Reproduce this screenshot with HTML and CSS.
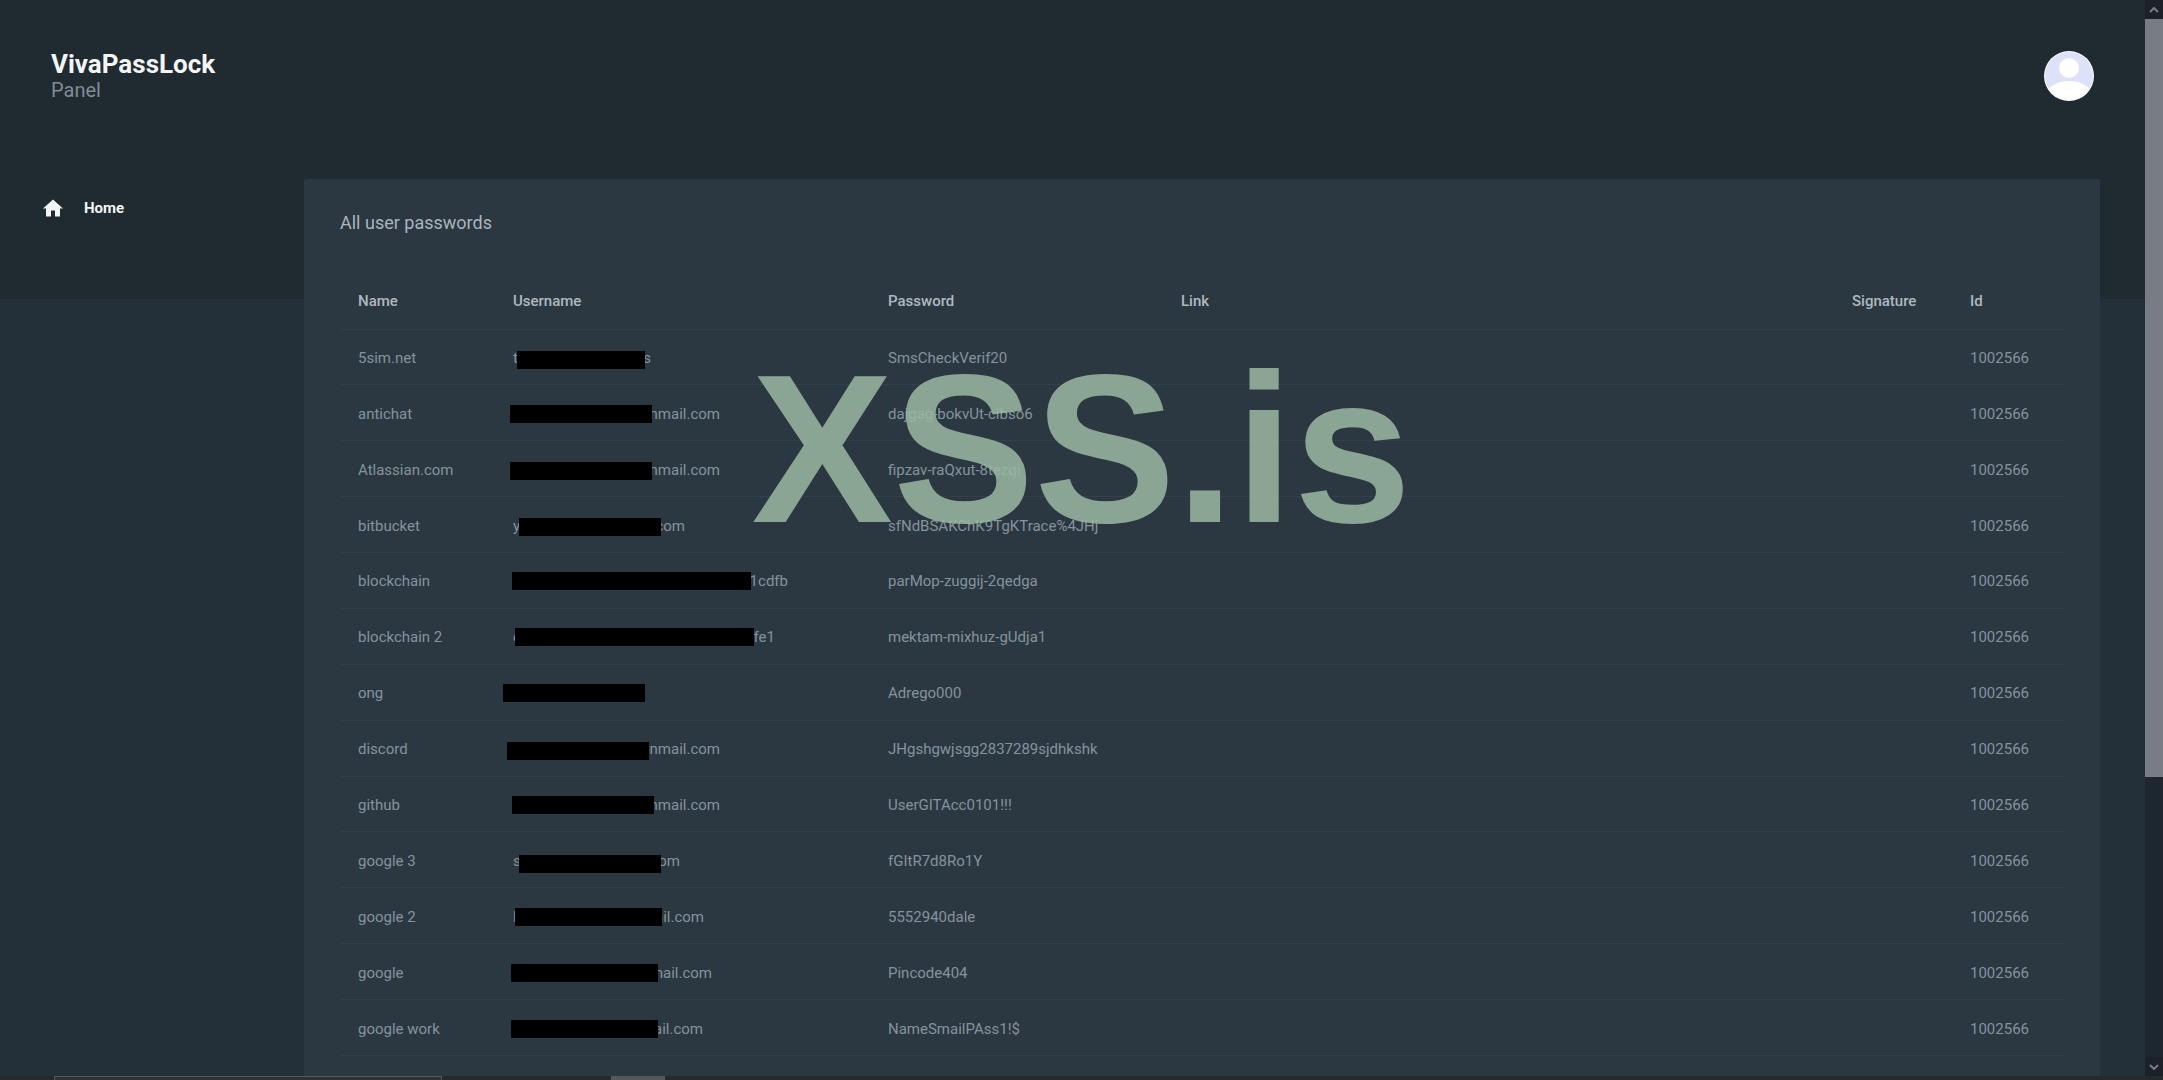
FILE: index.html
```html
<!DOCTYPE html>
<html lang="en">
<head>
    <meta charset="UTF-8">
    <meta name="viewport" content="width=device-width, initial-scale=1.0">
    <title>VivaPassLock</title>
    <link rel="stylesheet" href="styles.css">
</head>
<body>
    <div class="viewport">
        <div class="page">
            <header class="header">
                <div class="brand">
                    <h1>VivaPassLock</h1>
                    <p>Panel</p>
                </div>
                <button class="avatar" type="button" aria-label="Account">
                    <svg viewBox="0 0 50 50" width="50" height="50">
                        <defs>
                            <clipPath id="round"><circle cx="25" cy="25" r="24"/></clipPath>
                        </defs>
                        <circle cx="25" cy="25" r="25" fill="#fff"/>
                        <g clip-path="url(#round)">
                            <rect width="50" height="50" fill="#dde2fa"/>
                            <circle cx="25" cy="17" r="10" fill="#fff"/>
                            <ellipse cx="25" cy="48" rx="25" ry="18" fill="#fff"/>
                        </g>
                    </svg>
                </button>
            </header>
            <div class="content">
                <nav class="sidebar">
                    <a class="nav_link" href="#">
                        <svg viewBox="2 3 20 17" width="20" height="18">
                            <path fill="currentColor" d="M10 20v-6h4v6h5v-8h3L12 3 2 12h3v8z"/>
                        </svg>
                        <span>Home</span>
                    </a>
                </nav>
                <main class="card">
                    <h2>All user passwords</h2>
                    <table class="table">
                        <colgroup>
                            <col class="col_name">
                            <col class="col_user">
                            <col class="col_pass">
                            <col>
                            <col class="col_sign">
                            <col class="col_id">
                        </colgroup>
                        <thead>
                            <tr>
                                <th>Name</th>
                                <th>Username</th>
                                <th>Password</th>
                                <th>Link</th>
                                <th>Signature</th>
                                <th>Id</th>
                            </tr>
                        </thead>
                        <tbody id="rows"></tbody>
                    </table>
                </main>
            </div>
        </div>
        <div class="scrollbar">
            <button type="button" aria-label="Scroll up">
                <svg viewBox="0 0 10 6" width="10" height="6"><path d="M1 5l4-4 4 4"/></svg>
            </button>
            <div class="track"><div class="thumb"></div></div>
            <button type="button" aria-label="Scroll down">
                <svg viewBox="0 0 10 6" width="10" height="6"><path d="M1 1l4 4 4-4"/></svg>
            </button>
        </div>
    </div>
    <div class="taskbar">
        <div class="task_search"></div>
        <div class="task_active"></div>
    </div>
    <div class="watermark">XSS.is</div>
    <script src="script.js"></script>
</body>
</html>
```
FILE: styles.css
```css
* {
    box-sizing: border-box;
}
html, body {
    height: 100%;
}
body, h1, h2, p {
    margin: 0;
}
body {
    display: flex;
    flex-direction: column;
    overflow: hidden;
    font-family: Roboto, Arial, sans-serif;
    font-size: 15px;
    color: #84939c;
    background-color: #243039;
}
button {
    padding: 0;
    border: none;
    background: none;
    cursor: pointer;
}
svg {
    display: block;
}
.viewport {
    flex: 1;
    min-height: 0;
    display: flex;
}
.page {
    flex: 1;
    min-width: 0;
    overflow: hidden;
    background: linear-gradient(#1f2a31 299px, #243039 299px);
}

/* Header */
.header {
    display: flex;
    justify-content: space-between;
    align-items: flex-start;
    height: 179px;
    padding: 51px 51px 0;
}
.brand h1 {
    font-size: 26px;
    line-height: 26px;
    font-weight: 700;
    color: #f3f5f6;
}
.brand p {
    font-size: 20px;
    line-height: 26px;
    color: #7f8d95;
}
.avatar {
    border-radius: 50%;
}

/* Sidebar and card */
.content {
    display: flex;
    align-items: flex-start;
    padding-right: 45px;
}
.sidebar {
    flex: 0 0 304px;
    padding: 18px 43px;
}
.nav_link {
    display: flex;
    align-items: center;
    gap: 21px;
    line-height: 22px;
    font-weight: 700;
    color: #f3f5f6;
    text-decoration: none;
}
.card {
    flex: 1;
    min-width: 0;
    min-height: 900px;
    padding: 31px 36px;
    background-color: #2b3842;
    border-radius: 2px;
}
.card h2 {
    margin-bottom: 36px;
    font-size: 18px;
    line-height: 26px;
    font-weight: 400;
    color: #a9b4bb;
}

/* Table */
.table {
    width: 100%;
    height: 784px;
    border-collapse: collapse;
    table-layout: fixed;
}
.col_name {
    width: 155px;
}
.col_user {
    width: 375px;
}
.col_pass {
    width: 293px;
}
.col_sign {
    width: 118px;
}
.col_id {
    width: 112px;
}
th, td {
    padding: 2px 0 0 18px;
    text-align: left;
    line-height: 20px;
    white-space: nowrap;
    border-bottom: 1px solid #32404a;
}
th {
    height: 57px;
    font-weight: 500;
    color: #aeb9bf;
}
td {
    height: 55px;
}
.user {
    position: relative;
    display: flex;
    justify-content: space-between;
    min-height: 20px;
}
.mask {
    position: absolute;
    height: 18px;
    background-color: #000;
}

/* Scrollbar */
.scrollbar {
    flex: 0 0 18px;
    display: flex;
    flex-direction: column;
    background-color: #1e272f;
}
.scrollbar button {
    display: flex;
    align-items: center;
    justify-content: center;
    height: 19px;
    background-color: #1c2029;
}
.scrollbar path {
    fill: none;
    stroke: #787c84;
    stroke-width: 2;
}
.track {
    flex: 1;
}
.thumb {
    height: 73%;
    background-color: #787c84;
}

/* Taskbar edge */
.taskbar {
    flex: 0 0 4px;
    display: flex;
    padding-left: 54px;
    background-color: #28292c;
}
.task_search {
    width: 388px;
    margin-right: 169px;
    border: 1px solid #56585a;
    border-bottom: none;
    background-color: #303134;
}
.task_active {
    width: 54px;
    background-color: #56585a;
}

.watermark {
    position: absolute;
    top: 329px;
    left: 0;
    right: 0;
    text-align: center;
    font-family: "Liberation Sans", Arial, sans-serif;
    font-size: 212px;
    line-height: 240px;
    font-weight: 700;
    color: rgba(155, 185, 162, 0.85);
    pointer-events: none;
}
```
FILE: script.js
```js
// user: visible start and end of the name, its full width, then the mask (left, top, width)
const rows = [
    { name: "5sim.net", user: ["t", "s", 138, 4, 3, 128], password: "SmsCheckVerif20" },
    { name: "antichat", user: ["", "nmail.com", 207, -3, 1, 142], password: "dajgag-bokvUt-cibso6" },
    { name: "Atlassian.com", user: ["", "nmail.com", 207, -3, 2, 142], password: "fipzav-raQxut-8tezqi" },
    { name: "bitbucket", user: ["y", "com", 172, 6, 2, 142], password: "sfNdBSAKChK9TgKTrace%4JHj" },
    { name: "blockchain", user: ["", "1cdfb", 275, -1, 1, 239], password: "parMop-zuggij-2qedga" },
    { name: "blockchain 2", user: ["c", "cfe1", 262, 2, 1, 239], password: "mektam-mixhuz-gUdja1" },
    { name: "ong", user: ["", "", 138, -10, 1, 142], password: "Adrego000" },
    { name: "discord", user: ["", "onmail.com", 207, -6, 3, 142], password: "JHgshgwjsgg2837289sjdhkshk" },
    { name: "github", user: ["", "nmail.com", 207, -1, 1, 142], password: "UserGITAcc0101!!!" },
    { name: "google 3", user: ["s", "om", 167, 6, 4, 142], password: "fGItR7d8Ro1Y" },
    { name: "google 2", user: ["l", "ail.com", 191, 2, 1, 147], password: "5552940dale" },
    { name: "google", user: ["", "mail.com", 199, -2, 1, 147], password: "Pincode404" },
    { name: "google work", user: ["", "ail.com", 190, -2, 1, 147], password: "NameSmailPAss1!$" }
];

document.getElementById("rows").innerHTML = rows.map(row => {
    const [start, end, width, left, top, maskWidth] = row.user;
    return `<tr>
        <td>${row.name}</td>
        <td>
            <div class="user" style="width: ${width}px">
                <span>${start}</span><span>${end}</span>
                <span class="mask" style="left: ${left}px; top: ${top}px; width: ${maskWidth}px"></span>
            </div>
        </td>
        <td>${row.password}</td>
        <td></td>
        <td></td>
        <td>1002566</td>
    </tr>`;
}).join("");
```
